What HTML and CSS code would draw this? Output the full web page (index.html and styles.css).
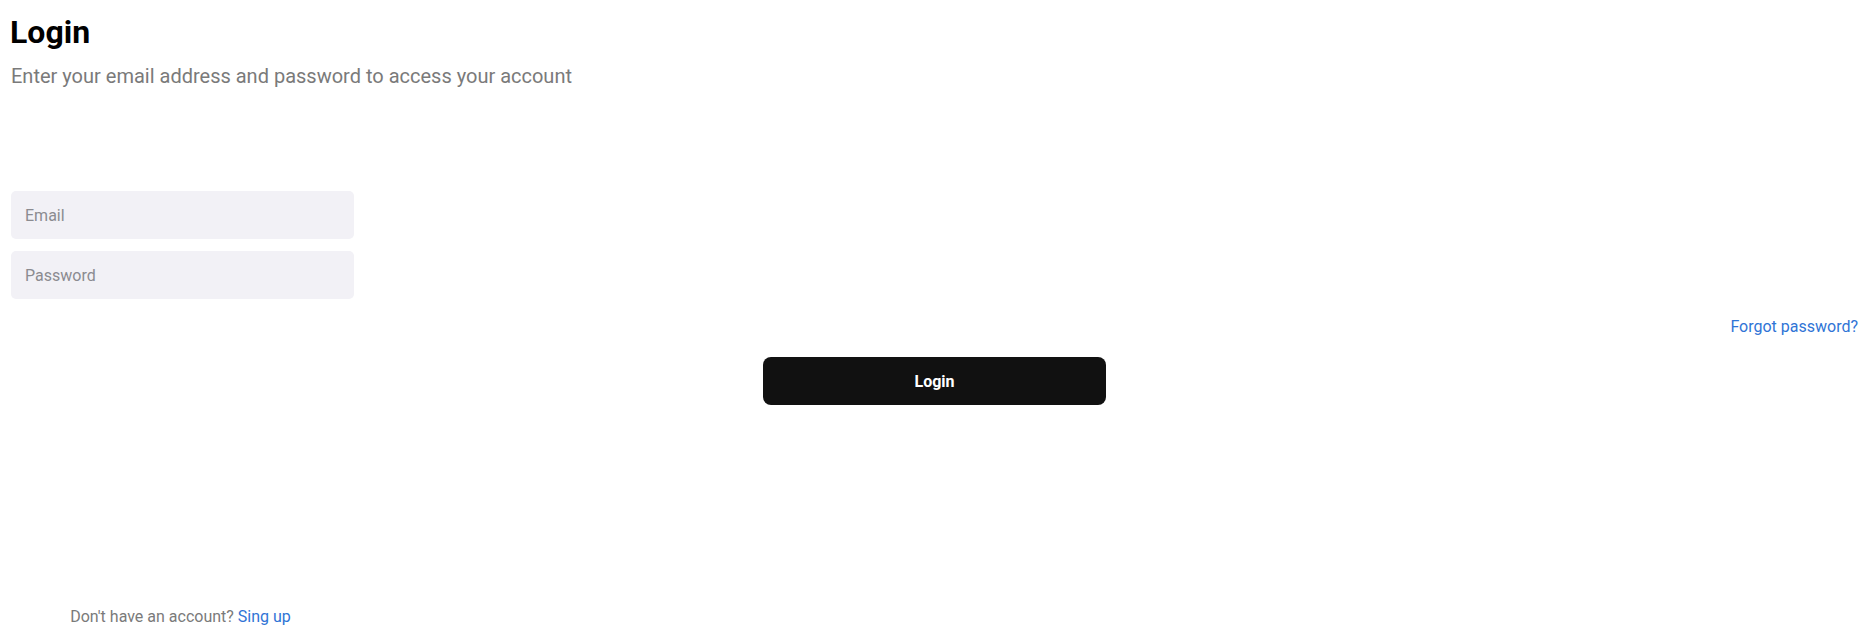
FILE: index.html
```html
<!DOCTYPE html>
<html lang="en">
<head>
<meta charset="utf-8">
<title>Login</title>
<link rel="stylesheet" href="styles.css">
</head>
<body>
<main class="page">
  <header class="header">
    <h1 class="title">Login</h1>
    <p class="subtitle">Enter your email address and password to access your account</p>
  </header>
  <form class="form">
    <input class="field" type="email" placeholder="Email">
    <input class="field" type="password" placeholder="Password">
  </form>
  <div class="forgot-row">
    <a class="link" href="#">Forgot password?</a>
  </div>
  <div class="button-row">
    <button class="btn" type="button">Login</button>
  </div>
  <footer class="footer">
    <p class="footer-text">Don't have an account? <a class="link" href="#">Sing up</a></p>
  </footer>
</main>
</body>
</html>
```

FILE: styles.css
```css
html, body {
  margin: 0;
  padding: 0;
  background: #ffffff;
}

body {
  font-family: Roboto, "Liberation Sans", Arial, sans-serif;
  color: #000;
}

.page {
  display: flex;
  flex-direction: column;
  padding: 14px 4px 0 11px;
}

.header {
  display: flex;
  flex-direction: column;
}

.title {
  margin: 0;
  font-size: 32px;
  font-weight: 700;
  line-height: 37px;
  margin-left: -1px;
}

.subtitle {
  margin: 13px 0 0;
  font-size: 20px;
  line-height: 24px;
  color: #7a7a7a;
}

.form {
  display: flex;
  flex-direction: column;
  gap: 12px;
  width: 343px;
  margin-top: 103px;
}

.field {
  box-sizing: border-box;
  height: 48px;
  border: none;
  border-radius: 5px;
  background: #f2f1f6;
  padding: 0 14px;
  font-family: inherit;
  font-size: 16px;
  color: #222;
  outline: none;
}

.field::placeholder {
  color: #8b8b90;
}

.forgot-row {
  display: flex;
  justify-content: flex-end;
  margin-top: 18px;
}

.link {
  color: #2f74d6;
  text-decoration: none;
  font-size: 16px;
  line-height: 19px;
}

.button-row {
  display: flex;
  justify-content: center;
  margin-top: 21px;
}

.btn {
  width: 343px;
  height: 48px;
  border: none;
  border-radius: 8px;
  background: #111111;
  color: #ffffff;
  font-family: inherit;
  font-size: 16px;
  font-weight: 700;
  cursor: pointer;
}

.footer {
  width: 339px;
  display: flex;
  justify-content: center;
  margin-top: 202px;
}

.footer-text {
  margin: 0;
  font-size: 16px;
  line-height: 19px;
  color: #7a7a7a;
}
```
